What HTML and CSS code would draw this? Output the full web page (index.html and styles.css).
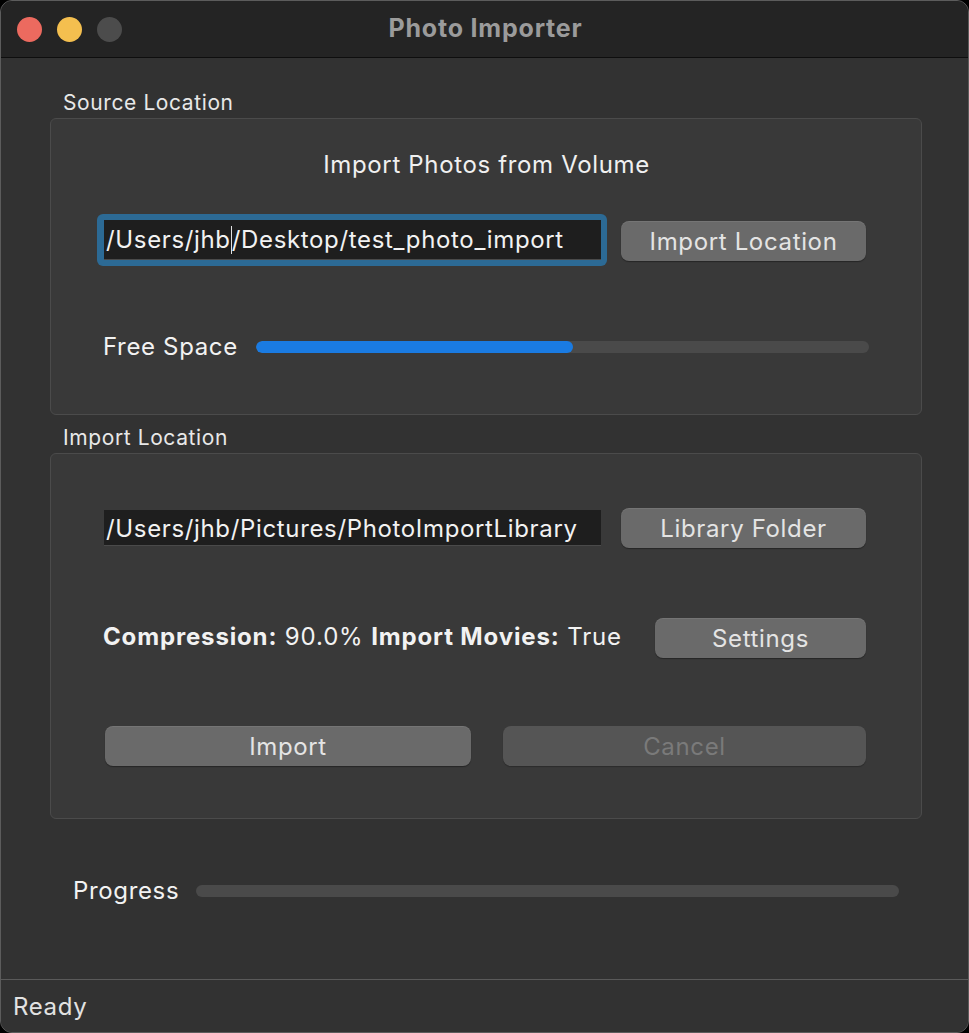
FILE: index.html
```html
<!DOCTYPE html>
<html>
<head>
<meta charset="utf-8">
<title>Photo Importer</title>
<link rel="stylesheet" href="styles.css">
</head>
<body>
<div class="window">
  <div class="titlebar">
    <div class="lights">
      <span class="light red"></span>
      <span class="light yellow"></span>
      <span class="light gray"></span>
    </div>
    <div class="title">Photo Importer</div>
  </div>
  <div class="content">
    <div class="section-label first">Source Location</div>
    <div class="group group-source">
      <div class="heading">Import Photos from Volume</div>
      <div class="row row-source">
        <div class="focus-ring">
          <div class="field">/Users/jhb<span class="caret"></span>/Desktop/test_photo_import</div>
        </div>
        <div class="button btn-import-loc">Import Location</div>
      </div>
      <div class="row row-free">
        <div class="label">Free Space</div>
        <div class="bar bar-free"><div class="bar-fill" style="width:51.8%"></div></div>
      </div>
    </div>
    <div class="section-label second">Import Location</div>
    <div class="group group-import">
      <div class="row row-lib">
        <div class="field plain">/Users/jhb/Pictures/PhotoImportLibrary</div>
        <div class="button btn-lib">Library Folder</div>
      </div>
      <div class="row row-settings">
        <div class="label info"><b>Compression:</b> 90.0% <b>Import Movies:</b> True</div>
        <div class="button btn-settings">Settings</div>
      </div>
      <div class="row row-actions">
        <div class="button btn-import">Import</div>
        <div class="button btn-cancel disabled">Cancel</div>
      </div>
    </div>
    <div class="row row-progress">
      <div class="label">Progress</div>
      <div class="bar bar-progress"></div>
    </div>
  </div>
  <div class="statusbar">Ready</div>
</div>
</body>
</html>
```

FILE: styles.css
```css
* { box-sizing: border-box; }
html, body {
  margin: 0;
  padding: 0;
  background: #000;
}
body {
  font-family: Inter, "Open Sans", "Liberation Sans", sans-serif;
  color: #ececec;
  letter-spacing: 0.65px;
}
.window {
  width: 969px;
  height: 1033px;
  border: 1px solid #5c5c5c;
  border-radius: 12px;
  overflow: hidden;
  display: flex;
  flex-direction: column;
  background: #323232;
}
.titlebar {
  height: 57px;
  flex: none;
  background: #242424;
  border-bottom: 1px solid #0e0e0e;
  position: relative;
  display: flex;
  align-items: center;
  justify-content: center;
}
.lights {
  position: absolute;
  left: 16px;
  top: 16px;
  display: flex;
  gap: 15px;
}
.light {
  width: 25px;
  height: 25px;
  border-radius: 50%;
  display: block;
}
.light.red { background: #ec6a5f; }
.light.yellow { background: #f4bf4f; }
.light.gray { background: #4c4c4c; }
.title {
  font-weight: 700;
  font-size: 25px;
  letter-spacing: 0.8px;
  color: #9b9b9b;
  margin-left: 2px;
  margin-top: -2px;
}
.content {
  flex: 1;
  padding: 0 46px 0 49px;
  display: flex;
  flex-direction: column;
}
.section-label {
  font-size: 21px;
  letter-spacing: 0.6px;
  line-height: 24px;
  margin-left: 13px;
  color: #e8e8e8;
}
.section-label.first { margin-top: 33px; margin-bottom: 3px; }
.section-label.second { margin-top: 11px; margin-bottom: 3px; }
.group {
  background: #393939;
  border: 1px solid #4b4b4b;
  border-radius: 6px;
  display: flex;
  flex-direction: column;
}
.group-source {
  height: 297px;
  padding: 32px 55px 0 46px;
}
.heading {
  text-align: center;
  font-size: 24px;
  line-height: 28px;
  margin-left: 10px;
  color: #f0f0f0;
}
.row {
  display: flex;
  align-items: center;
}
.row-source {
  margin-top: 35px;
  gap: 14px;
}
.focus-ring {
  width: 510px;
  height: 52px;
  padding: 6px 6px 6px 7px;
  background: #2c6a95;
  border-radius: 6px;
}
.field {
  height: 100%;
  background: #1e1e1e;
  border-bottom: 1px solid #4a4a4a;
  font-size: 24px;
  line-height: 39px;
  padding-left: 2px;
  color: #f2f2f2;
  white-space: nowrap;
  overflow: hidden;
}
.caret {
  display: inline-block;
  width: 1px;
  height: 28px;
  background: #e0e0e0;
  vertical-align: -6px;
}
.field.plain {
  width: 497px;
  height: 36px;
  line-height: 37px;
  flex: none;
}
.button {
  height: 40px;
  border-radius: 8px;
  background: #6a6a6a;
  box-shadow: 0 1px 1px rgba(0,0,0,0.35), inset 0 1px 0 rgba(255,255,255,0.08);
  color: #e4e4e4;
  font-size: 24px;
  line-height: 41px;
  text-align: center;
  flex: none;
}
.btn-import-loc { width: 245px; margin-top: 2px; }
.row-free {
  margin-top: 67px;
  margin-left: 6px;
  margin-right: -3px;
}
.label {
  font-size: 24px;
  line-height: 28px;
  white-space: nowrap;
  color: #f2f2f2;
}
.bar {
  height: 12px;
  border-radius: 6px;
  background: #4a4a4a;
  overflow: hidden;
}
.bar-free {
  flex: 1;
  margin-left: 18px;
}
.bar-fill {
  height: 100%;
  background: #1a7be2;
  border-radius: 6px;
}
.group-import {
  height: 366px;
  padding: 54px 55px 0 53px;
}
.row-lib {
  gap: 20px;
}
.btn-lib { width: 245px; }
.row-settings {
  margin-top: 70px;
  margin-left: -1px;
  justify-content: space-between;
}
.row-settings .label { margin-top: -3px; }
.label.info { letter-spacing: 0.85px; }
.btn-settings { width: 211px; }
.row-actions {
  margin-top: 68px;
  justify-content: space-between;
}
.btn-import { width: 366px; margin-left: 1px; }
.btn-cancel { width: 363px; }
.button.disabled {
  background: #555555;
  color: #7a7a7a;
  box-shadow: 0 1px 1px rgba(0,0,0,0.25);
}
.row-progress {
  margin-top: 58px;
  margin-left: 23px;
  margin-right: 23px;
}
.bar-progress {
  flex: 1;
  margin-left: 17px;
}
.statusbar {
  flex: none;
  height: 53px;
  border-top: 1px solid #5a5a5a;
  background: #323232;
  font-size: 24px;
  line-height: 54px;
  padding-left: 12px;
  color: #e2e2e2;
}
```
